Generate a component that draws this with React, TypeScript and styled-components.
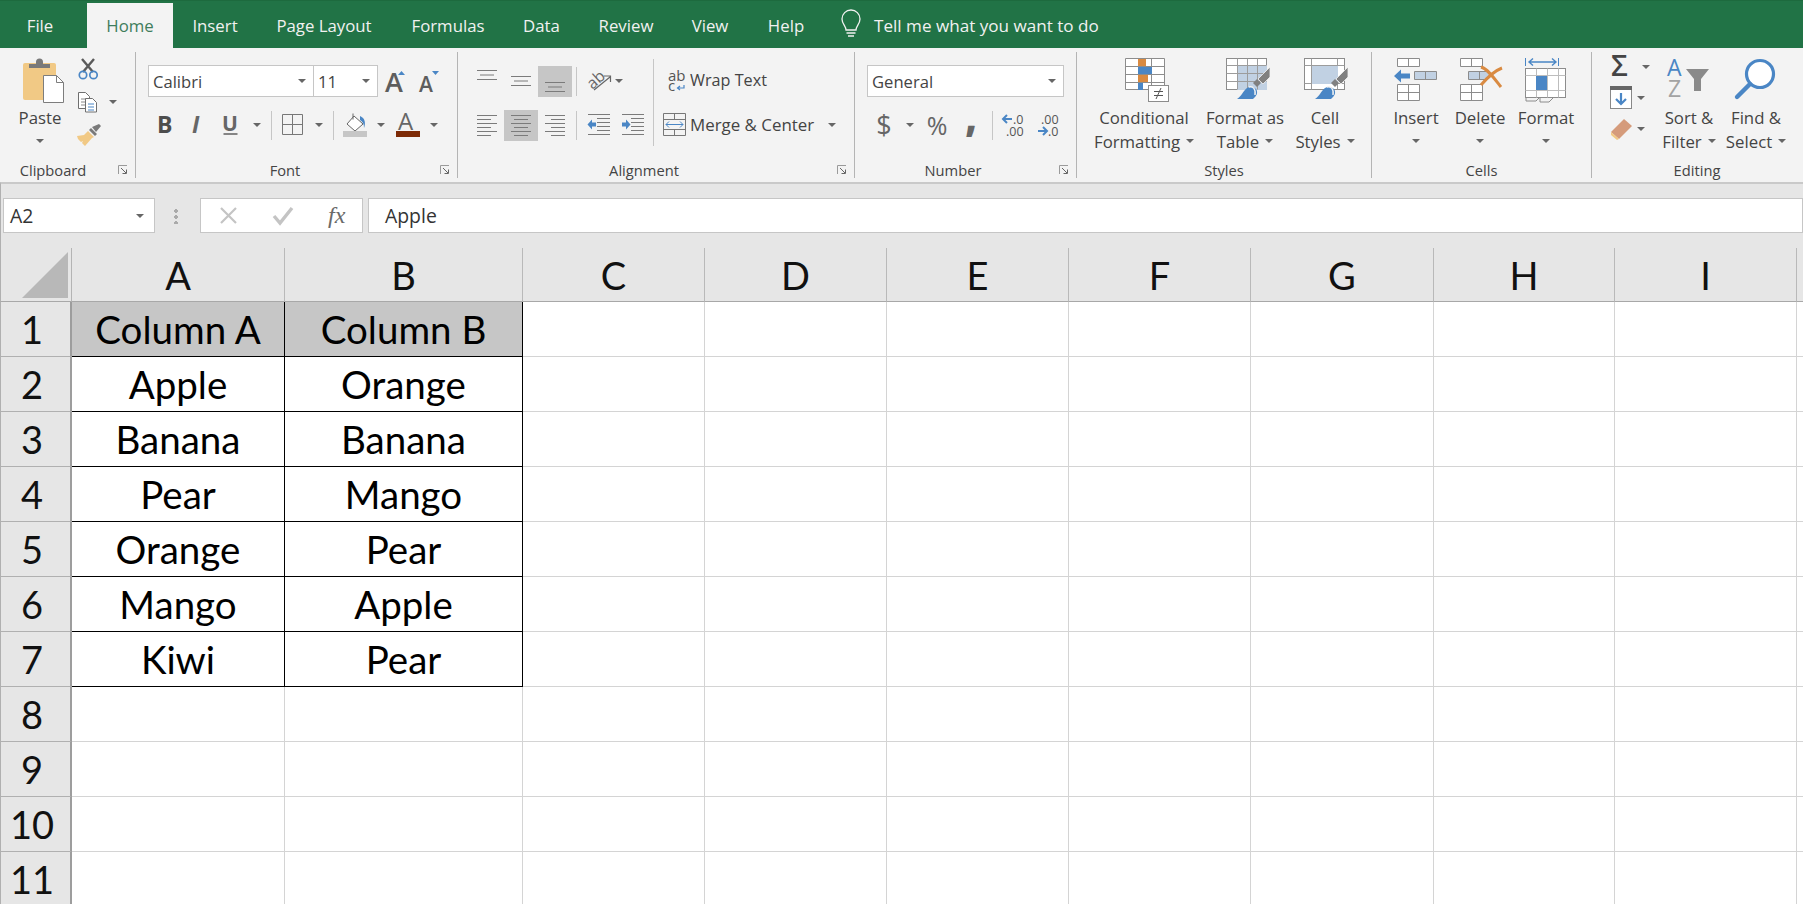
import React from "react";
import styled, { createGlobalStyle } from "styled-components";

const Global = createGlobalStyle`
  html, body { margin: 0; padding: 0; background: #fff; overflow: hidden; }
  #root { width: 1803px; height: 904px; overflow: hidden; }
`;

const UI = `"Open Sans", "Noto Sans", sans-serif`;
const BLUE = "#4a86c5";
const LINE = "#7b7b7b";
const ORANGE = "#d98a41";
const PALE = "#c1d1e3";

const Page = styled.div`
  width: 1803px;
  height: 904px;
  overflow: hidden;
  display: flex;
  flex-direction: column;
  font-family: ${UI};
`;

/* ---------- tabs ---------- */
const TabBar = styled.div`
  height: 48px;
  flex: none;
  box-sizing: border-box;
  border-top: 1px solid #1d6a3e;
  background: #217346;
  display: flex;
  align-items: flex-end;
`;
const Tab = styled.div<{ $w: number; $active?: boolean; $ml?: number }>`
  width: ${(p) => p.$w}px;
  margin-left: ${(p) => p.$ml ?? 0}px;
  height: 45px;
  flex: none;
  display: flex;
  align-items: center;
  justify-content: center;
  font-size: 16.8px;
  padding-bottom: 1px;
  box-sizing: border-box;
  color: ${(p) => (p.$active ? "#3f7d5c" : "#f1f1f1")};
  background: ${(p) => (p.$active ? "#f3f3f3" : "transparent")};
`;
const TellMe = styled.div`
  display: flex;
  align-items: center;
  height: 45px;
  margin-left: 15px;
  gap: 13px;
  padding-bottom: 1px;
  box-sizing: border-box;
  color: #f1f1f1;
  font-size: 17.1px;
`;

/* ---------- ribbon ---------- */
const Ribbon = styled.div`
  height: 134px;
  flex: none;
  background: #f3f3f3;
  display: flex;
`;
const Group = styled.div<{ $w: number }>`
  width: ${(p) => p.$w}px;
  flex: none;
  display: flex;
  flex-direction: column;
  position: relative;
`;
const GroupDivider = styled.div`
  width: 1px;
  height: 126px;
  margin-top: 4px;
  flex: none;
  background: #b4b4b4;
`;
const GroupBody = styled.div<{ $pl?: number }>`
  height: 112px;
  flex: none;
  display: flex;
  padding-left: ${(p) => p.$pl ?? 0}px;
  box-sizing: border-box;
`;
const GroupLabel = styled.div<{ $pr?: number }>`
  height: 20px;
  padding-right: ${(p) => p.$pr ?? 0}px;
  display: flex;
  align-items: center;
  justify-content: center;
  font-size: 14.7px;
  color: #444;
`;
const LauncherMark = styled.svg`
  position: absolute;
  right: 7px;
  bottom: 7px;
  width: 10px;
  height: 10px;
`;
const Launcher = () => (
  <LauncherMark viewBox="0 0 10 10">
    <path d="M.5 9V.5H9" fill="none" stroke="#9a9a9a" />
    <path d="M3 3l5 5M8.500 4.500v4h-4" fill="none" stroke="#666" />
  </LauncherMark>
);

const Stack = styled.div<{ $w?: number; $pt?: number; $gap?: number; $ml?: number }>`
  display: flex;
  flex-direction: column;
  flex: none;
  ${(p) => (p.$w ? `width:${p.$w}px;` : "")}
  padding-top: ${(p) => p.$pt ?? 17}px;
  gap: ${(p) => p.$gap ?? 12}px;
  margin-left: ${(p) => p.$ml ?? 0}px;
`;
const ToolRow = styled.div<{ $h?: number; $pl?: number; $mt?: number }>`
  display: flex;
  align-items: center;
  flex: none;
  height: ${(p) => p.$h ?? 32}px;
  padding-left: ${(p) => p.$pl ?? 0}px;
  margin-top: ${(p) => p.$mt ?? 0}px;
  color: #444;
  font-size: 15px;
`;
const Caret = styled.span<{ $ml?: number; $mr?: number }>`
  flex: none;
  display: inline-block;
  width: 0;
  height: 0;
  margin-left: ${(p) => p.$ml ?? 0}px;
  margin-right: ${(p) => p.$mr ?? 0}px;
  border-left: 4px solid transparent;
  border-right: 4px solid transparent;
  border-top: 4px solid #666;
`;
const ToolSep = styled.div<{ $ml: number }>`
  width: 1px;
  height: 29px;
  flex: none;
  margin-left: ${(p) => p.$ml}px;
  background: #c6c6c6;
`;
const TallSep = styled.div`
  width: 1px;
  height: 87px;
  margin-top: 11px;
  flex: none;
  background: #c6c6c6;
`;
const IconSvg = styled.svg<{ $ml?: number }>`
  display: block;
  flex: none;
  overflow: visible;
  margin-left: ${(p) => p.$ml ?? 0}px;
  font-family: ${UI};
`;
type IcProps = { x: number; y: number; w: number; h: number; ml?: number; children: React.ReactNode };
const Ic = ({ x, y, w, h, ml, children }: IcProps) => (
  <IconSvg viewBox={`${x} ${y} ${w} ${h}`} width={w} height={h} $ml={ml}>
    {children}
  </IconSvg>
);

const Large = styled.div<{ $w: number; $ml?: number }>`
  width: ${(p) => p.$w}px;
  margin-left: ${(p) => p.$ml ?? 0}px;
  flex: none;
  padding-top: 10px;
  display: flex;
  flex-direction: column;
  align-items: center;
`;
const LargeIcon = styled.div`
  height: 47px;
  flex: none;
`;
const LargeLine = styled.div`
  height: 24px;
  display: flex;
  align-items: center;
  white-space: nowrap;
  font-size: 16.8px;
  color: #444;
`;
const ComboBox = styled.div<{ $w: number; $ml?: number; $pl?: number }>`
  width: ${(p) => p.$w}px;
  height: 32px;
  margin-left: ${(p) => p.$ml ?? 0}px;
  padding: 0 7px 0 ${(p) => p.$pl ?? 4}px;
  box-sizing: border-box;
  flex: none;
  display: flex;
  align-items: center;
  justify-content: space-between;
  background: #fff;
  border: 1px solid #c6c6c6;
  font-size: 16.6px;
  color: #444;
`;
const AlignCell = styled.div<{ $active?: boolean }>`
  width: 34px;
  height: 31px;
  flex: none;
  background: ${(p) => (p.$active ? "#c6c6c6" : "transparent")};
  display: flex;
  align-items: center;
  justify-content: center;
`;
const TextTool = styled.span<{ $w: number; $ml?: number; $size?: number; $bold?: boolean; $up?: number }>`
  width: ${(p) => p.$w}px;
  margin-left: ${(p) => p.$ml ?? 0}px;
  padding-bottom: ${(p) => p.$up ?? 0}px;
  flex: none;
  text-align: center;
  font-size: ${(p) => p.$size ?? 24}px;
  font-weight: ${(p) => (p.$bold ? 800 : 400)};
  color: #666;
  line-height: 32px;
`;
const ToolLabel = styled.span<{ $ml: number; $size?: number }>`
  margin-left: ${(p) => p.$ml}px;
  padding-bottom: 2px;
  white-space: nowrap;
  font-size: ${(p) => p.$size ?? 16.6}px;
  color: #444;
`;

/* ---------- icons ---------- */
const PasteIcon = () => (
  <Ic x={23} y={58} w={42} h={46} ml={7}>
    <path d="M23 65a2 2 0 0 1 2-2h29a2 2 0 0 1 2 2v35H25a2 2 0 0 1-2-2z" fill="#f1c985" />
    <path d="M29 68v-4h7v-2a3.500 3.500 0 0 1 7 0v2h7v4z" fill="#7a7a7a" />
    <path d="M43.500 75.500h13l7 7v20h-20z" fill="#fff" stroke="#7d7d7d" />
    <path d="M56.500 75.500v7h7" fill="none" stroke="#7d7d7d" />
  </Ic>
);
const CutIcon = () => (
  <Ic x={77} y={58} w={23} h={22}>
    <path d="M82 59l11 13M94 59L83 72" stroke="#5a5a5a" strokeWidth={2.4} fill="none" />
    <circle cx={83} cy={75} r={3.7} fill="none" stroke={BLUE} strokeWidth={1.7} />
    <circle cx={93.500} cy={75} r={3.7} fill="none" stroke={BLUE} strokeWidth={1.7} />
  </Ic>
);
const CopyIcon = () => (
  <Ic x={78} y={91} w={22} h={22}>
    <path d="M79.500 92.500h7l4 4v12h-11z" fill="#fff" stroke="#6f6f6f" />
    <path d="M82 99h6M82 102h6M82 105h4" stroke="#8a8a8a" />
    <path d="M86.500 98.500h7l4 4v9.500h-11z" fill="#fff" stroke="#6f6f6f" />
    <path d="M89 104h6M89 107h6M89 110h6" stroke={BLUE} />
  </Ic>
);
const PainterIcon = () => (
  <Ic x={77} y={124} w={24} h={22}>
    <path d="M88 131l6 6-2 1-7 8-3-3 1-2-2 1-3-3-1-3 7-1z" fill="#f1c985" />
    <path d="M89 130l6 6 2-2-6-6zM92 127l7-3 2 2-5 6z" fill="#7a7a7a" />
  </Ic>
);
const GrowIcon = () => (
  <Ic x={384} y={66} w={24} h={28} ml={6}>
    <text x={385} y={91} fontSize={27} fontWeight={600} fill="#5d5d5d">A</text>
    <path d="M398 74l3.500-4 3.500 4z" fill={BLUE} />
  </Ic>
);
const ShrinkIcon = () => (
  <Ic x={418} y={66} w={22} h={28} ml={10}>
    <text x={419} y={91} fontSize={21} fontWeight={600} fill="#5d5d5d">A</text>
    <path d="M432 70h7l-3.500 4z" fill={BLUE} />
  </Ic>
);
const BoldIcon = () => (
  <Ic x={156} y={110} w={20} h={30}>
    <text x={157} y={133} fontSize={23} fontWeight={700} fill="#4d4d4d">B</text>
  </Ic>
);
const ItalicIcon = () => (
  <Ic x={188} y={110} w={20} h={30} ml={12}>
    <text x={192} y={133} fontSize={23} fontWeight={700} fontStyle="italic" fill="#666">I</text>
  </Ic>
);
const UnderlineIcon = () => (
  <Ic x={222} y={110} w={20} h={30} ml={12}>
    <text x={224} y={131} fontSize={21} fontWeight={700} fill="#666">U</text>
    <path d="M225.500 134h14" stroke="#555" strokeWidth={1.4} />
  </Ic>
);
const BordersIcon = () => (
  <Ic x={284} y={114} w={22} h={22} ml={10}>
    <path d="M284.500 114.500h20v20h-20zM294.500 114.500v20M284.500 124.500h20" fill="none" stroke="#777" />
  </Ic>
);
const FillIcon = () => (
  <Ic x={344} y={112} w={26} h={26} ml={8}>
    <path d="M356 116l9 8-8 7-8-7z" fill="#fff" stroke="#666" />
    <path d="M355 113.500v6" stroke="#666" />
    <path d="M362 116c5 2 6 7 4 12 0-4-1-6-4-8z" fill={BLUE} />
    <rect x={345} y={131} width={24} height={6} fill="#c6c6c6" />
  </Ic>
);
const FontColorIcon = () => (
  <Ic x={397} y={112} w={26} h={26} ml={10}>
    <text x={400} y={130} fontSize={24} fontWeight={500} fill="#666">A</text>
    <rect x={398} y={131} width={24} height={6} fill="#7d2a06" />
  </Ic>
);
type L = [number, number];
const LinesIcon = ({ lines, y0, step }: { lines: L[]; y0: number; step: number }) => (
  <Ic x={0} y={0} w={20} h={31}>
    {lines.map(([a, b], i) => (
      <path key={i} d={`M${a} ${y0 + i * step + 0.5}H${b}`} stroke={LINE} />
    ))}
  </Ic>
);
const OrientIcon = () => (
  <Ic x={586} y={66} w={27} h={30} ml={9}>
    <text x={587} y={86} fontSize={16} fill="#666" transform="rotate(-42 595 81)">ab</text>
    <path d="M594 90l16-13M604 76h6.500v6" fill="none" stroke="#666" strokeWidth={1.2} />
  </Ic>
);
const IndentIcon = ({ x, flip, ml }: { x: number; flip?: boolean; ml: number }) => (
  <Ic x={x} y={109} w={23} h={31} ml={ml}>
    <path d={`M${x + 1} 113.500h22M${x + 10} 117.500h13M${x + 10} 121.500h13M${x + 10} 125.500h13M${x + 10} 129.500h13M${x + 1} 133.500h22`} stroke={LINE} />
    {flip ? (
      <path d={`M${x + 1} 121.500h4v-3l4.500 5-4.500 5v-3h-4z`} fill={BLUE} />
    ) : (
      <path d={`M${x + 9} 121.500h-4v-3l-4.500 5 4.500 5v-3h4z`} fill={BLUE} />
    )}
  </Ic>
);
const WrapIcon = () => (
  <Ic x={666} y={68} w={20} h={24}>
    <text x={667} y={80} fontSize={15} fill="#555">ab</text>
    <text x={667} y={90} fontSize={15} fill="#555">c</text>
    <path d="M683 84v3h-6M679 85l-2.500 2 2.500 2" fill="none" stroke={BLUE} strokeWidth={1.2} />
  </Ic>
);
const MergeIcon = () => (
  <Ic x={663} y={112} w={24} h={24}>
    <path d="M663.500 112.500h22v22h-22zM663.500 118.500h22M663.500 128.500h22M674.500 112.500v6M674.500 128.500v6" fill="none" stroke="#777" />
    <path d="M666 123.500h17M669 120.500l-3 3 3 3M680 120.500l3 3-3 3" fill="none" stroke={BLUE} />
  </Ic>
);
const IncDec = ({ x, inc, ml }: { x: number; inc?: boolean; ml: number }) => (
  <Ic x={x} y={112} w={26} h={26} ml={ml}>
    {inc ? (
      <>
        <path d={`M${x + 2} 119h9M${x + 6} 115l-4 4 4 4`} fill="none" stroke={BLUE} strokeWidth={2} />
        <text x={x + 12} y={124} fontSize={12.500} fill="#555">.0</text>
        <text x={x + 5} y={136} fontSize={12.500} fill="#555">.00</text>
      </>
    ) : (
      <>
        <text x={x + 6} y={124} fontSize={12.500} fill="#555">.00</text>
        <path d={`M${x + 3} 131h9M${x + 8} 127l4 4-4 4`} fill="none" stroke={BLUE} strokeWidth={2} />
        <text x={x + 13} y={136} fontSize={12.500} fill="#555">.0</text>
      </>
    )}
  </Ic>
);
const CondIcon = () => (
  <Ic x={1125} y={58} w={45} h={44} ml={7}>
    <path d="M1125.500 58.500h39v31h-39zM1125.500 66.500h39M1125.500 74.500h39M1125.500 82.500h39M1138.500 58.500v31M1151.500 58.500v31" fill="#fff" stroke="#8c8c8c" />
    <rect x={1138} y={59} width={8} height={7} fill={ORANGE} />
    <rect x={1138} y={67} width={14} height={7} fill={BLUE} />
    <rect x={1138} y={75} width={10} height={7} fill={ORANGE} />
    <rect x={1138} y={83} width={5} height={7} fill={BLUE} />
    <rect x={1148.500} y={85.500} width={20} height={16} fill="#fff" stroke="#8c8c8c" />
    <path d="M1154 91.500h9M1154 95.500h9M1161 88l-5 11" stroke="#555" fill="none" />
  </Ic>
);
const Brush = ({ dx, dy }: { dx: number; dy: number }) => (
  <g transform={`translate(${dx} ${dy})`}>
    <path d="M1270 70v10l-7 7-5-5z" fill="#808080" stroke="#f3f3f3" strokeWidth={0.8} />
    <path d="M1253 86l4-4 4 4-4 4z" fill="#808080" />
    <path d="M1237 102c4-2 6-8 10-11 3-2 7-1 9 1 2 3 1 6-1 8l-2 2z" fill={BLUE} />
    <path d="M1249 90c4-1 7 2 6 8" fill="none" stroke="#f3f3f3" strokeWidth={1.4} />
  </g>
);
const TableIcon = () => (
  <Ic x={1226} y={61} w={45} h={42} ml={6}>
    <rect x={1226.500} y={61.500} width={40} height={31} fill="#fff" stroke="#8c8c8c" />
    <rect x={1237} y={68} width={30} height={25} fill={PALE} />
    <path d="M1226.500 68.500h40M1226.500 76.500h40M1226.500 84.500h40M1237.500 61.500v31M1247.500 61.500v31M1257.500 61.500v31" fill="none" stroke="#9c9c9c" />
    <Brush dx={0} dy={0} />
  </Ic>
);
const CellStylesIcon = () => (
  <Ic x={1304} y={58} w={45} h={43} ml={2}>
    <rect x={1304.500} y={58.500} width={40} height={31} fill="#fff" stroke="#8c8c8c" />
    <path d="M1304.500 65.500h40M1304.500 83.500h40M1311.500 58.500v31M1337.500 58.500v31" fill="none" stroke="#9c9c9c" />
    <rect x={1312} y={66} width={26} height={18} fill={PALE} />
    <Brush dx={78} dy={-3} />
  </Ic>
);
const TwoCells = ({ x, y, fill = "#fff" }: { x: number; y: number; fill?: string }) => (
  <path d={`M${x}.5 ${y}.5h22v8h-22zM${x + 11}.5 ${y}.5v8`} fill={fill} stroke="#8c8c8c" />
);
const Quad = ({ x, y }: { x: number; y: number }) => (
  <path d={`M${x}.5 ${y}.5h22v16h-22zM${x + 11}.5 ${y}.5v16M${x}.5 ${y + 8}.5h22`} fill="#fff" stroke="#8c8c8c" />
);
const InsertIcon = () => (
  <Ic x={1394} y={58} w={44} h={44}>
    <TwoCells x={1397} y={58} />
    <path d="M1394 76l7-6.500v4h9v5h-9v4z" fill={BLUE} />
    <TwoCells x={1414} y={71} fill={PALE} />
    <Quad x={1397} y={84} />
  </Ic>
);
const DeleteIcon = () => (
  <Ic x={1461} y={58} w={44} h={44} ml={4}>
    <TwoCells x={1461} y={58} />
    <path d="M1469.500 71.500h19v8h-19zM1480.500 71.500v8" fill={PALE} stroke="#8c8c8c" />
    <path d="M1488 71l5 4.500-5 4.500z" fill={PALE} />
    <Quad x={1461} y={84} />
    <path d="M1482 67c7 2 13 11 20 20M1503 68c-8 3-15 10-21 17" fill="none" stroke={ORANGE} strokeWidth={3} />
  </Ic>
);
const FormatIcon = () => (
  <Ic x={1525} y={57} w={42} h={46}>
    <path d="M1525.500 57v8M1558.500 57v8" stroke={BLUE} />
    <path d="M1529 61h27M1533 57.500l-4 3.500 4 3.500M1552 57.500l4 3.500-4 3.500" fill="none" stroke={BLUE} strokeWidth={1.4} />
    <rect x={1525.500} y={67.500} width={40} height={29} fill="#fff" stroke="#8c8c8c" />
    <path d="M1525.500 74.500h40M1525.500 89.500h40M1536.500 67.500v29M1547.500 67.500v29M1558.500 67.500v29" fill="none" stroke="#bdbdbd" />
    <rect x={1536} y={75} width={11} height={14} fill={BLUE} />
    <path d="M1526 97v3h10l3-3M1540 97v4h9l4-4" fill="none" stroke="#8c8c8c" />
  </Ic>
);
const SigmaIcon = () => (
  <Ic x={1610} y={57} w={28} h={20}>
    <text x={1611} y={76} fontSize={29} fontWeight={600} fill="#444">Σ</text>
  </Ic>
);
const FillDownIcon = () => (
  <Ic x={1610} y={86} w={22} h={23}>
    <rect x={1610.500} y={86.500} width={21} height={22} fill="#fff" stroke="#888" />
    <rect x={1610} y={86} width={22} height={4} fill="#666" />
    <path d="M1621 93v11M1616 99l5 5 5-5" fill="none" stroke={BLUE} strokeWidth={2.2} />
  </Ic>
);
const EraserIcon = () => (
  <Ic x={1610} y={118} w={22} h={22}>
    <path d="M1611 132l13-13 8 7-13 13z" fill="#d59b7b" />
    <path d="M1611 132l8 7-2 1-6-5z" fill="#f1c985" />
  </Ic>
);
const SortIcon = () => (
  <Ic x={1667} y={57} w={44} h={41}>
    <text x={1667} y={75} fontSize={23} fontWeight={500} fill={BLUE}>A</text>
    <text x={1668} y={96} fontSize={23} fontWeight={500} fill="#a3a3a3">Z</text>
    <path d="M1686 68h23l-8 10v12h-7V78z" fill="#8a8a8a" />
  </Ic>
);
const FindIcon = () => (
  <Ic x={1735} y={58} w={42} h={42}>
    <circle cx={1760} cy={74} r={13.500} fill="#fff" stroke={BLUE} strokeWidth={3.2} />
    <path d="M1750 84l-13 13" stroke={BLUE} strokeWidth={4.4} strokeLinecap="round" />
  </Ic>
);
const BulbIcon = () => (
  <Ic x={841} y={12} w={20} h={26}>
    <path d="M846 30c0-4-4-6-4-11a9 9 0 0 1 18 0c0 5-4 7-4 11z" fill="none" stroke="#f1f1f1" strokeWidth={1.3} />
    <path d="M846.500 33h9M848 36h6" stroke="#f1f1f1" strokeWidth={1.3} />
  </Ic>
);

/* ---------- formula bar ---------- */
const FormulaBar = styled.div`
  height: 66px;
  flex: none;
  box-sizing: border-box;
  border-top: 2px solid #c9c9c9;
  border-left: 1px solid #b0b0b0;
  background: #e6e6e6;
  padding: 14px 0 0 2px;
  display: flex;
  align-items: flex-start;
`;
const FieldBox = styled.div<{ $w?: number; $ml?: number }>`
  ${(p) => (p.$w ? `width:${p.$w}px;flex:none;` : "flex:1;")}
  height: 35px;
  margin-left: ${(p) => p.$ml ?? 0}px;
  box-sizing: border-box;
  background: #fff;
  border: 1px solid #c6c6c6;
  display: flex;
  align-items: center;
  font-size: 19.4px;
  color: #333;
`;
const NameText = styled.span`
  flex: 1;
  padding-left: 6px;
`;
const FormulaText = styled.span`
  padding-left: 16px;
`;
const Handle = styled.div`
  width: 4px;
  height: 16px;
  margin: 10px 0 0 19px;
  flex: none;
  background: radial-gradient(circle, #aaa 1.7px, transparent 2px) 0 0 / 4px 6px;
`;
const FxBox = styled(FieldBox)`
  justify-content: flex-start;
`;
const CancelIcon = () => (
  <Ic x={218} y={207} w={20} h={18} ml={18}>
    <path d="M220 208l15 15M235 208l-15 15" stroke="#c4c4c4" strokeWidth={2.2} />
  </Ic>
);
const CheckIcon = () => (
  <Ic x={272} y={206} w={21} h={19} ml={34}>
    <path d="M273 216l6 7 12-15" fill="none" stroke="#c4c4c4" strokeWidth={3.4} />
  </Ic>
);
const FxMark = styled.span`
  margin-left: 34px;
  font-family: "Liberation Serif", serif;
  font-style: italic;
  font-size: 24px;
  color: #6a6a6a;
`;

/* ---------- sheet ---------- */
const Sheet = styled.div`
  flex: 1;
  display: grid;
  grid-template-columns: 72px 213px 238px 182px 182px 182px 182px 183px 181px 182px 7px;
  grid-auto-rows: 55px;
  grid-template-rows: 54px;
  background: #fff;
`;
const Corner = styled.div`
  background: #e6e6e6;
  border-left: 1px solid #b0b0b0;
  border-right: 1px solid #b4b4b4;
  border-bottom: 1px solid #a8a8a8;
  display: flex;
  align-items: flex-end;
  justify-content: flex-end;
  padding: 0 3px 3px 0;
`;
const CornerTriangle = styled.div`
  width: 46px;
  height: 46px;
  background: #b8b8b8;
  clip-path: polygon(100% 0, 100% 100%, 0 100%);
`;
const CELL_FONT = `Lato, "Liberation Sans", sans-serif`;
const ColHead = styled.div`
  background: #e6e6e6;
  box-sizing: border-box;
  border-right: 1px solid #b9b9b9;
  border-bottom: 1px solid #a8a8a8;
  display: flex;
  align-items: center;
  justify-content: center;
  font-family: ${CELL_FONT};
  font-size: 38px;
  color: #111;
`;
const RowHead = styled.div`
  background: #e6e6e6;
  box-sizing: border-box;
  border-left: 1px solid #b0b0b0;
  border-right: 2px solid #9d9d9d;
  border-bottom: 1px solid #b0b0b0;
  display: flex;
  align-items: center;
  justify-content: center;
  font-family: ${CELL_FONT};
  font-size: 38px;
  color: #111;
  padding-right: 7px;
`;
const Cell = styled.div<{ $data?: boolean; $head?: boolean }>`
  box-sizing: border-box;
  background: ${(p) => (p.$head ? "#c6c6c6" : "#fff")};
  border-right: 1px solid ${(p) => (p.$data ? "#000" : "#d4d4d4")};
  border-bottom: 1px solid ${(p) => (p.$data ? "#000" : "#d4d4d4")};
  display: flex;
  align-items: center;
  justify-content: center;
  font-family: ${CELL_FONT};
  font-size: 38.5px;
  color: #000;
  white-space: nowrap;
`;

const COLS = ["A", "B", "C", "D", "E", "F", "G", "H", "I", ""];
const DATA: [string, string][] = [
  ["Column A", "Column B"],
  ["Apple", "Orange"],
  ["Banana", "Banana"],
  ["Pear", "Mango"],
  ["Orange", "Pear"],
  ["Mango", "Apple"],
  ["Kiwi", "Pear"],
];
const ROWS = Array.from({ length: 11 }, (_, i) => i);
const h3 = (a: number, b: number): L[] => [[a, b], [a + 3, b - 3], [a, b]];

export default function App() {
  return (
    <Page>
      <Global />
      <TabBar>
        <Tab $w={80}>File</Tab>
        <Tab $w={86} $ml={7} $active>Home</Tab>
        <Tab $w={84}>Insert</Tab>
        <Tab $w={134}>Page Layout</Tab>
        <Tab $w={114}>Formulas</Tab>
        <Tab $w={73}>Data</Tab>
        <Tab $w={96}>Review</Tab>
        <Tab $w={72}>View</Tab>
        <Tab $w={80}>Help</Tab>
        <TellMe>
          <BulbIcon />
          <span>Tell me what you want to do</span>
        </TellMe>
      </TabBar>

      <Ribbon>
        <Group $w={135}>
          <GroupBody $pl={6}>
            <Large $w={68}>
              <LargeIcon><PasteIcon /></LargeIcon>
              <LargeLine>Paste</LargeLine>
              <LargeLine><Caret /></LargeLine>
            </Large>
            <Stack $pt={10} $gap={11} $ml={3}>
              <ToolRow $h={22}><CutIcon /></ToolRow>
              <ToolRow $h={22}><CopyIcon /><Caret $ml={10} /></ToolRow>
              <ToolRow $h={22}><PainterIcon /></ToolRow>
            </Stack>
          </GroupBody>
          <GroupLabel $pr={29}>Clipboard</GroupLabel>
          <Launcher />
        </Group>
        <GroupDivider />

        <Group $w={321}>
          <GroupBody>
            <Stack>
              <ToolRow $pl={12}>
                <ComboBox $w={166}>Calibri<Caret /></ComboBox>
                <ComboBox $w={65} $ml={-1}>11<Caret /></ComboBox>
                <GrowIcon />
                <ShrinkIcon />
              </ToolRow>
              <ToolRow $pl={20}>
                <BoldIcon />
                <ItalicIcon />
                <UnderlineIcon />
                <Caret $ml={13} />
                <ToolSep $ml={10} />
                <BordersIcon />
                <Caret $ml={11} />
                <ToolSep $ml={10} />
                <FillIcon />
                <Caret $ml={9} />
                <FontColorIcon />
                <Caret $ml={9} />
              </ToolRow>
            </Stack>
          </GroupBody>
          <GroupLabel $pr={23}>Font</GroupLabel>
          <Launcher />
        </Group>
        <GroupDivider />

        <Group $w={396}>
          <GroupBody>
            <Stack $w={195}>
              <ToolRow $pl={12}>
                <AlignCell><LinesIcon lines={h3(0, 20)} y0={4} step={4.5} /></AlignCell>
                <AlignCell><LinesIcon lines={h3(0, 20)} y0={10} step={4.5} /></AlignCell>
                <AlignCell $active><LinesIcon lines={h3(0, 20)} y0={16} step={4.5} /></AlignCell>
                <ToolSep $ml={4} />
                <OrientIcon />
                <Caret $ml={2} />
              </ToolRow>
              <ToolRow $pl={12}>
                <AlignCell><LinesIcon lines={[[0,20],[0,14],[0,20],[0,14],[0,20],[0,14]]} y0={5} step={4} /></AlignCell>
                <AlignCell $active><LinesIcon lines={[[0,20],[3,17],[0,20],[3,17],[0,20],[3,17]]} y0={5} step={4} /></AlignCell>
                <AlignCell><LinesIcon lines={[[0,20],[6,20],[0,20],[6,20],[0,20],[6,20]]} y0={5} step={4} /></AlignCell>
                <ToolSep $ml={4} />
                <IndentIcon x={587} ml={10} />
                <IndentIcon x={621} flip ml={11} />
              </ToolRow>
            </Stack>
            <TallSep />
            <Stack>
              <ToolRow $pl={13}><WrapIcon /><ToolLabel $ml={3} $size={16.2}>Wrap Text</ToolLabel></ToolRow>
              <ToolRow $pl={9}><MergeIcon /><ToolLabel $ml={3} $size={16.9}>Merge &amp; Center</ToolLabel><Caret $ml={14} /></ToolRow>
            </Stack>
          </GroupBody>
          <GroupLabel $pr={24}>Alignment</GroupLabel>
          <Launcher />
        </Group>
        <GroupDivider />

        <Group $w={221}>
          <GroupBody>
            <Stack>
              <ToolRow $pl={12}>
                <ComboBox $w={197}>General<Caret /></ComboBox>
              </ToolRow>
              <ToolRow $pl={12}>
                <TextTool $w={34} $size={27}>$</TextTool>
                <Caret $ml={5} />
                <TextTool $w={30} $ml={8} $size={25}>%</TextTool>
                <TextTool $w={20} $ml={9} $size={38} $bold $up={16}>,</TextTool>
                <ToolSep $ml={11} />
                <IncDec x={1001} inc ml={8} />
                <IncDec x={1035} ml={8} />
              </ToolRow>
            </Stack>
          </GroupBody>
          <GroupLabel $pr={25}>Number</GroupLabel>
          <Launcher />
        </Group>
        <GroupDivider />

        <Group $w={294}>
          <GroupBody>
            <Large $w={94} $ml={20}>
              <LargeIcon><CondIcon /></LargeIcon>
              <LargeLine>Conditional</LargeLine>
              <LargeLine>Formatting<Caret $ml={6} /></LargeLine>
            </Large>
            <Large $w={82} $ml={13}>
              <LargeIcon><TableIcon /></LargeIcon>
              <LargeLine>Format as</LargeLine>
              <LargeLine>Table<Caret $ml={6} /></LargeLine>
            </Large>
            <Large $w={70} $ml={4}>
              <LargeIcon><CellStylesIcon /></LargeIcon>
              <LargeLine>Cell</LargeLine>
              <LargeLine>Styles<Caret $ml={6} /></LargeLine>
            </Large>
          </GroupBody>
          <GroupLabel>Styles</GroupLabel>
        </Group>
        <GroupDivider />

        <Group $w={219}>
          <GroupBody>
            <Large $w={60} $ml={14}>
              <LargeIcon><InsertIcon /></LargeIcon>
              <LargeLine>Insert</LargeLine>
              <LargeLine><Caret /></LargeLine>
            </Large>
            <Large $w={60} $ml={4}>
              <LargeIcon><DeleteIcon /></LargeIcon>
              <LargeLine>Delete</LargeLine>
              <LargeLine><Caret /></LargeLine>
            </Large>
            <Large $w={68} $ml={2}>
              <LargeIcon><FormatIcon /></LargeIcon>
              <LargeLine>Format</LargeLine>
              <LargeLine><Caret /></LargeLine>
            </Large>
          </GroupBody>
          <GroupLabel>Cells</GroupLabel>
        </Group>
        <GroupDivider />

        <Group $w={210}>
          <GroupBody>
            <Stack $w={47} $ml={18} $pt={9} $gap={0}>
              <ToolRow $h={20}><SigmaIcon /><Caret $ml={4} /></ToolRow>
              <ToolRow $h={23} $mt={9}><FillDownIcon /><Caret $ml={5} /></ToolRow>
              <ToolRow $h={22} $mt={9}><EraserIcon /><Caret $ml={5} /></ToolRow>
            </Stack>
            <Large $w={64}>
              <LargeIcon><SortIcon /></LargeIcon>
              <LargeLine>Sort &amp;</LargeLine>
              <LargeLine>Filter<Caret $ml={6} /></LargeLine>
            </Large>
            <Large $w={64} $ml={3}>
              <LargeIcon><FindIcon /></LargeIcon>
              <LargeLine>Find &amp;</LargeLine>
              <LargeLine>Select<Caret $ml={6} /></LargeLine>
            </Large>
          </GroupBody>
          <GroupLabel>Editing</GroupLabel>
        </Group>
      </Ribbon>

      <FormulaBar>
        <FieldBox $w={152}>
          <NameText>A2</NameText>
          <Caret $mr={10} />
        </FieldBox>
        <Handle />
        <FxBox $w={163} $ml={22}>
          <CancelIcon />
          <CheckIcon />
          <FxMark>fx</FxMark>
        </FxBox>
        <FieldBox $ml={5}>
          <FormulaText>Apple</FormulaText>
        </FieldBox>
      </FormulaBar>

      <Sheet>
        <Corner><CornerTriangle /></Corner>
        {COLS.map((c, i) => <ColHead key={i}>{c}</ColHead>)}
        {ROWS.map((r) => (
          <React.Fragment key={r}>
            <RowHead>{r + 1}</RowHead>
            {COLS.map((_, c) => {
              const row = DATA[r];
              const inTable = !!row && c < 2;
              return (
                <Cell key={c} $data={inTable} $head={inTable && r === 0}>
                  {inTable ? row[c] : ""}
                </Cell>
              );
            })}
          </React.Fragment>
        ))}
      </Sheet>
    </Page>
  );
}
